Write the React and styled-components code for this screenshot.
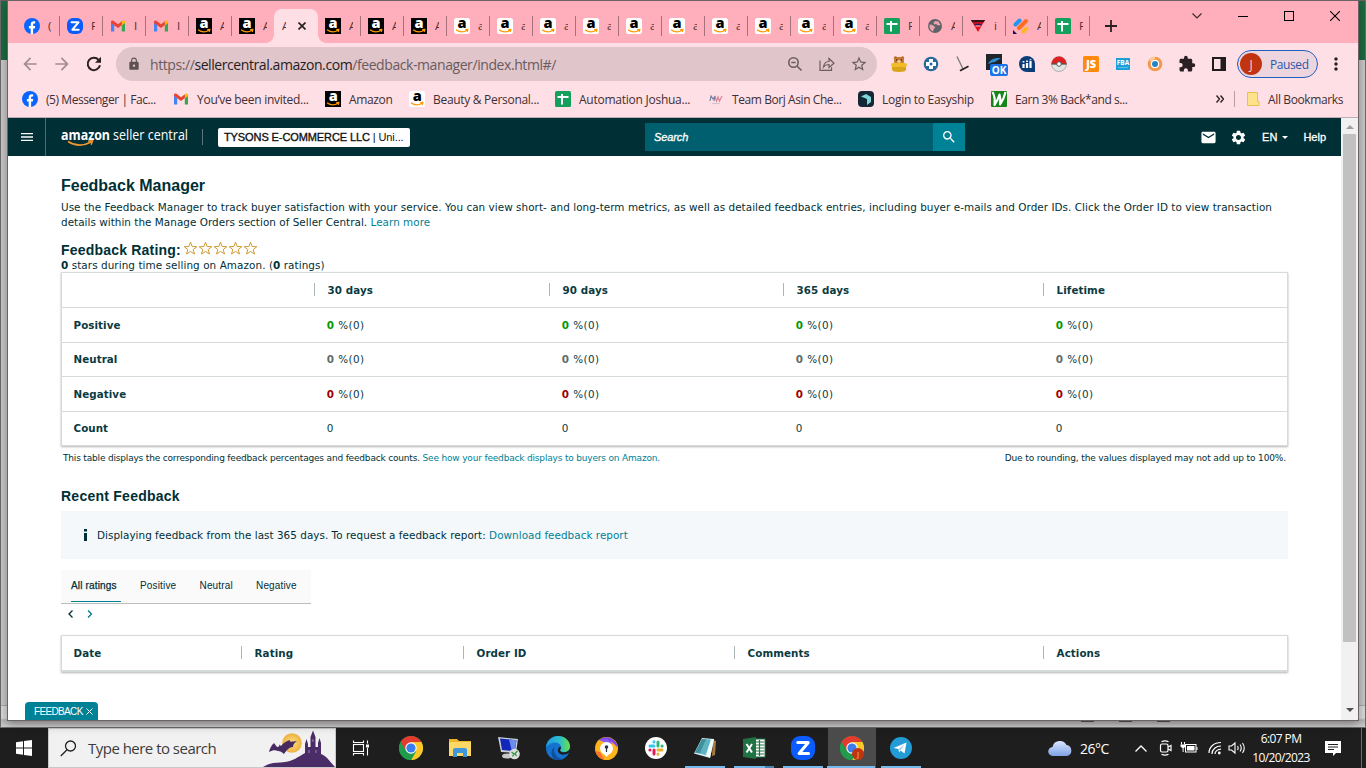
import React from "react";
import styled, { createGlobalStyle } from "styled-components";
import {
  MdArrowBack, MdArrowForward, MdLock, MdStarBorder, MdExtension,
  MdMoreVert, MdEmail, MdSettings, MdSearch, MdMenu,
} from "react-icons/md";

const Global = createGlobalStyle`
  *{box-sizing:border-box}
  body{margin:0;overflow:hidden;background:#c9c9c9}
  svg{display:block;flex:none}
`;
const segoe = `"Open Sans","Noto Sans",sans-serif`;
const verdana = `"DejaVu Sans",Verdana,sans-serif`;
const arial = `"Liberation Sans",Arial,sans-serif`;

/* ---------- desktop ---------- */
const Desktop = styled.div`
  position:relative;width:1366px;height:768px;display:flex;flex-direction:column;
  font-family:${segoe};overflow:hidden;background:#d0d0d0;
`;
const BackWindow = styled.div`
  height:728px;display:flex;flex-direction:column;background:#c9c7c7;
  border:1px solid #6b6b6b;border-top-color:#7a5a60;
`;
const BackTitle = styled.div`height:59px;background:#1d6b42;`;
const BackBody = styled.div`flex:1;border-bottom:1px solid #a9a9a9;background:#cbc9c9;`;
const BackStatus = styled.div`
  height:21px;background:linear-gradient(#dcdcdc 0 12px,#b5b5b5 14px,#cfcfcf);
  display:flex;align-items:flex-start;justify-content:flex-end;gap:25px;padding:13px 195px 0 0;
`;
const ViewButton = styled.span`width:13px;height:3px;border-bottom:1px solid #555;`;
const Browser = styled.div`
  position:absolute;left:7px;top:0;width:1352px;height:721px;display:flex;flex-direction:column;
  border:1px solid #6a6265;background:#fff;box-shadow:0 3px 10px rgba(0,0,0,.35);
`;

/* ---------- tab strip ---------- */
const TabStrip = styled.div`height:42px;background:#ffaebc;display:flex;padding:8px 0 0 9px;`;
const Tab = styled.div`
  width:${(p) => p.$w || 43}px;height:34px;display:flex;align-items:center;position:relative;
  padding-left:7px;gap:8px;
  &::after{content:"";position:absolute;right:0;top:7px;width:1px;height:20px;
    background:${(p) => (p.$noSep ? "transparent" : "#a5727c")};}
`;
const TabLetter = styled.span`
  width:4px;height:16px;overflow:hidden;font-size:11.5px;line-height:16px;color:#4b3035;
`;
const ActiveTab = styled.div`
  width:44px;height:34px;background:#ffdfe6;border-radius:8px 8px 0 0;display:flex;align-items:center;
  padding-left:8px;gap:12px;margin-left:-1px;position:relative;z-index:1;
  &::before,&::after{content:"";position:absolute;bottom:0;width:8px;height:8px;}
  &::before{left:-8px;background:radial-gradient(circle at 0 0,transparent 7.5px,#ffdfe6 8px);}
  &::after{right:-8px;background:radial-gradient(circle at 100% 0,transparent 7.5px,#ffdfe6 8px);}
`;
const NewTab = styled.div`width:42px;height:34px;display:flex;align-items:center;justify-content:center;`;
const WindowButtons = styled.div`
  margin-left:auto;height:14px;display:flex;align-items:center;
`;
const WindowButton = styled.div`width:46px;height:14px;display:flex;align-items:center;justify-content:center;`;

/* ---------- toolbar ---------- */
const Toolbar = styled.div`height:42px;background:#ffdfe6;display:flex;align-items:center;padding-left:6px;`;
const ToolButton = styled.div`
  width:32px;height:32px;display:flex;align-items:center;justify-content:center;
  color:${(p) => p.$c || "#2a2023"};flex:none;
`;
const Omnibox = styled.div`
  width:761px;height:34px;margin-left:6px;border-radius:17px;background:#e0c5ca;display:flex;align-items:center;
  padding:0 2px 0 11px;flex:none;margin-right:6px;
`;
const Url = styled.div`
  flex:1;margin-left:9px;font-size:14px;letter-spacing:${(p) => p.$ls}px;color:#6a5b5f;white-space:nowrap;
  b{font-weight:400;color:#251d1f;}
`;
const Profile = styled.div`
  width:81px;height:28px;border:1px solid #1f5fbf;border-radius:14px;background:#edd5e0;margin:0 2px;
  display:flex;align-items:center;padding-left:2px;gap:8px;color:#2b57a5;font-size:12px;letter-spacing:-.4px;flex:none;
`;
const Avatar = styled.div`
  width:22px;height:22px;border-radius:50%;background:#c0350f;color:#f6d6cc;font-size:12px;
  display:flex;align-items:center;justify-content:center;
`;

/* ---------- bookmarks ---------- */
const Bookmarks = styled.div`
  height:33px;background:#ffdfe6;border-bottom:1px solid #bcaeb2;display:grid;align-items:center;padding:0 0 4px 14px;
  grid-template-columns:151px 152px 84px 146px 153px 150px 133px 223px 20px 1px 1fr;
`;
const Bookmark = styled.div`
  display:flex;align-items:center;gap:8px;font-size:12px;color:#3d3033;white-space:nowrap;
  letter-spacing:${(p) => p.$ls || 0}px;padding-left:${(p) => p.$pl || 0}px;
`;
const BookmarkRule = styled.div`height:16px;width:1px;background:#b79ea4;`;

/* ---------- seller header ---------- */
const Viewport = styled.div`flex:1;display:flex;min-height:0;position:relative;`;
const Page = styled.div`width:1333px;display:flex;flex-direction:column;background:#fff;`;
const Header = styled.div`height:38px;background:#002f36;display:flex;align-items:center;flex:none;`;
const MenuCell = styled.div`
  width:38px;height:38px;border-right:1px solid #4b6b70;display:flex;align-items:center;justify-content:center;color:#fff;
`;
const Logo = styled.div`width:128px;margin-left:14px;height:26px;`;
const Rule = styled.div`width:1px;height:16px;background:#5b777b;margin:0 15px 0 14px;`;
const Account = styled.div`
  width:192px;height:19px;background:#fff;border-radius:2px;font:11px/19px ${arial};color:#111;padding-left:6px;
  white-space:nowrap;letter-spacing:${(p) => p.$ls}px;
  b{font-weight:400;-webkit-text-stroke:.35px #111;}
`;
const SearchBox = styled.div`
  width:288px;height:28px;margin-left:235px;background:#005f6e;color:#fff;font:italic 11px/28px ${arial};padding-left:9px;
  -webkit-text-stroke:.3px #fff;letter-spacing:-.1px;
`;
const SearchButton = styled.div`
  width:32px;height:28px;background:#008296;display:flex;align-items:center;justify-content:center;color:#fff;
`;
const HeaderRight = styled.div`
  margin-left:auto;display:flex;align-items:center;color:#fff;font:11px ${arial};-webkit-text-stroke:.3px #fff;
  padding-right:15px;
  svg{-webkit-text-stroke:0;}
`;
const Caret = styled.span`border:3px solid transparent;border-top-color:#fff;border-bottom:0;margin:0 15px 0 5px;`;
const Gap = styled.span`width:${(p) => p.$w}px;`;

/* ---------- page body ---------- */
const Body = styled.div`
  padding:21px 53px 0;display:flex;flex-direction:column;color:#002f36;font-family:${verdana};font-size:10.4px;position:relative;
`;
const Heading = styled.div`
  font:bold ${(p) => p.$s}px/18px ${arial};letter-spacing:${(p) => p.$ls || 0}px;height:18px;white-space:nowrap;
`;
const SectionHeading = styled(Heading)`margin-top:21px;`;
const Link = styled.span`color:#007f96;`;
const Intro = styled.div`
  margin-top:5px;display:flex;flex-direction:column;line-height:15px;white-space:nowrap;
`;
const Line = styled.div`font-size:${(p) => p.$s || 10.4}px;letter-spacing:${(p) => p.$ls}px;white-space:nowrap;`;
const RatingRow = styled.div`margin-top:11px;height:17px;display:flex;align-items:flex-start;gap:2px;`;
const Stars = styled.div`display:flex;gap:0;`;
const Tally = styled.div`height:14px;line-height:15px;letter-spacing:${(p) => p.$ls}px;white-space:nowrap;`;
const Table = styled.div`
  width:1227px;border:1px solid #d5dbdb;border-bottom-width:${(p) => p.$bb || 1}px;box-shadow:0 1px 2px rgba(0,0,0,.3);
  display:flex;flex-direction:column;margin-top:${(p) => p.$mt || 0}px;
`;
const Row = styled.div`
  display:grid;grid-template-columns:${(p) => p.$cols};height:${(p) => p.$h}px;align-items:center;
  & + &{border-top:1px solid #d5dbdb;}
`;
const Cell = styled.div`
  padding:0 0 ${(p) => p.$up || 0}px ${(p) => (p.$first ? 11.5 : p.$b ? 13.6 : 12.8)}px;white-space:nowrap;font-size:${(p) => (p.$b ? 10.3 : 10.4)}px;
  font-weight:${(p) => (p.$b ? 700 : 400)};letter-spacing:${(p) => (p.$b ? 0.08 : 0.45)}px;color:#0b3a41;
  position:relative;line-height:14px;
  ${(p) => p.$rule && `&::before{content:"";position:absolute;left:0;top:0;height:13px;width:1px;background:#aab7b8;}`}
  b{color:${(p) => p.$n || "inherit"};}
`;
const Notes = styled.div`
  display:flex;justify-content:space-between;padding:0 2px;height:17px;margin-top:3px;line-height:18px;font-size:9px;
`;
const Alert = styled.div`
  height:48px;background:#f4f8fa;margin-top:6px;display:flex;align-items:center;padding-left:22px;white-space:nowrap;
`;
const RatingTabs = styled.div`
  width:250px;height:34px;margin-top:11px;background:#fafafa;border-bottom:1px solid #b9bfbf;display:flex;padding-left:10px;
  font:10px/32px ${arial};
`;
const RatingTab = styled.div`
  width:${(p) => p.$w}px;height:32px;margin-right:${(p) => p.$mr}px;letter-spacing:.16px;white-space:nowrap;
  ${(p) => p.$on && "border-bottom:1px solid #008296;-webkit-text-stroke:.25px #002f36;"}
`;
const Pager = styled.div`height:20px;display:flex;align-items:center;gap:14px;padding-left:7px;`;
const FeedbackTab = styled.div`
  position:absolute;left:17px;bottom:0;width:73px;height:18px;background:#008296;color:#fff;border-radius:4px 4px 0 0;
  display:flex;align-items:center;padding-left:9px;gap:3px;font:10px ${arial};letter-spacing:-.65px;
`;
const ScrollBar = styled.div`
  width:17px;background:#f1f1f1;display:flex;flex-direction:column;align-items:center;padding:7px 0 8px;
`;
const Thumb = styled.div`width:13px;height:508px;background:#c1c1c1;margin-top:5px;`;
const Arrow = styled.div`
  border:4px solid transparent;
  ${(p) => (p.$down ? "border-top-color:#505050;border-bottom:0;margin-top:auto;" : "border-bottom-color:#a0a0a0;border-top:0;")}
`;

/* ---------- taskbar ---------- */
const Taskbar = styled.div`height:40px;background:#1e1e1e;display:flex;align-items:center;flex:none;color:#fff;`;
const StartCell = styled.div`width:48px;height:40px;display:flex;align-items:center;justify-content:center;`;
const SearchField = styled.div`
  width:288px;height:40px;background:#f1f1f1;border:1px solid #c9c9c9;display:flex;align-items:center;padding-left:11px;gap:11px;
  color:#3c3c3c;font-size:15px;letter-spacing:${(p) => p.$ls}px;
  svg:last-child{margin-left:auto;}
`;
const AppCell = styled.div`
  width:${(p) => p.$w || 49}px;height:40px;display:flex;align-items:center;justify-content:center;position:relative;
  ${(p) => p.$active && "background:linear-gradient(#4b4b4b,#4b4b4b) center/48px 100% no-repeat;"}
  &::after{content:"";position:absolute;bottom:0;left:${(p) => (p.$active ? 0 : 5)}px;right:${(p) => (p.$active ? 1 : 4)}px;height:2px;
    background:${(p) => (p.$split ? "linear-gradient(90deg,#76b9ed 31px,#4d81ad 31px)" : p.$run ? "#76b9ed" : "transparent")};}
`;
const Tray = styled.div`margin-left:auto;display:flex;align-items:center;height:40px;`;
const Temp = styled.div`font-size:14px;letter-spacing:-.5px;width:55px;padding-left:8px;`;
const Clock = styled.div`
  width:66px;display:flex;flex-direction:column;align-items:center;font-size:12px;line-height:19px;letter-spacing:-.6px;margin-left:2px;
`;
const ShowDesktop = styled.div`width:5px;height:40px;border-left:1px solid #6a6a6a;margin-left:19px;`;

/* ---------- icons ---------- */
const FbIcon = () => (
  <svg width="16" height="16" viewBox="0 0 16 16"><circle cx="8" cy="8" r="8" fill="#0866ff" />
    <path d="M6.700 16V10.400H4.900V8h1.800V6.600C6.700 4.300 7.800 3.200 9.900 3.200c.5 0 1 .1 1.300.2v2.100c-1.500-.1-2.100.1-2.100 1.300V8h2.100l-.4 2.400H9.100V16z" fill="#fff" /></svg>
);
const ReloadIcon = () => (
  <svg width="16" height="16" viewBox="0 0 16 16"><path d="M14 9.300A6.200 6.200 0 1 1 12.600 3.800" fill="none" stroke="#2a2023" strokeWidth="2" /><path d="M15 .8v6H9z" fill="#2a2023" /></svg>
);
const ZoomIcon = ({ s = 16 }) => (
  <svg width={s} height={s} viewBox="0 0 16 16"><rect width="16" height="16" rx="6" fill="#0b5cff" />
    <path d="M4.500 4.300h7L5.400 11.700h6.300" fill="none" stroke="#fff" strokeWidth="2" strokeLinejoin="round" strokeLinecap="round" /></svg>
);
const GmailIcon = () => (
  <svg width="16" height="16" viewBox="0 0 16 16">
    <path d="M1 13.500V4.500L4.200 7v6.500z" fill="#4285f4" /><path d="M11.800 13.500V7L15 4.500v9z" fill="#34a853" />
    <path d="M1 5V4c0-1.300 1.400-1.900 2.400-1.200L8 6.300l4.600-3.500 0 3.600L8 10 1 5z" fill="#ea4335" />
    <path d="M11.800 3.400l.8-.6C13.600 2.100 15 2.700 15 4v1l-3.200 2.500z" fill="#fbbc04" /></svg>
);
const AmazonIcon = ({ dark }) => (
  <svg width="16" height="16" viewBox="0 0 16 16"><rect width="16" height="16" rx={dark ? 0 : 2.500} fill={dark ? "#000" : "#fff"} />
    <text x="8" y="10.300" textAnchor="middle" fontFamily="Open Sans,sans-serif" fontWeight="800" fontSize="14.500" fill={dark ? "#fff" : "#000"}>a</text>
    <path d="M2 11.800Q7.500 15.800 13 12.300M11.200 11.700l2.600-.2-.5 2.300" fill="none" stroke="#f90" strokeWidth="1.300" /></svg>
);
const SheetIcon = () => (
  <svg width="16" height="16" viewBox="0 0 16 16"><rect width="16" height="16" rx="1.500" fill="#12a05c" />
    <path d="M2.500 6h11M7 3v10.500" stroke="#fff" strokeWidth="2" /></svg>
);
const GlobeIcon = () => (
  <svg width="16" height="16" viewBox="0 0 16 16"><circle cx="8" cy="8" r="7" fill="#5f6368" />
    <path d="M2.500 6.500l3 .5 3 2.500-1.500 1-1 3C3.500 12.500 2 10 2.500 6.500zM8.500 3l3 .5 2 3.500-2.500.5-2-1.500-2 .5-.5-2z" fill="#e8a5b0" /></svg>
);
const TriIcon = () => (
  <svg width="16" height="16" viewBox="0 0 16 16"><path d="M1 2h14L8 14z" fill="#e8111c" /><path d="M1 2h14l-1.300 2.300H2.300z" fill="#32151a" />
    <path d="M4.500 6.500h7" stroke="#2a1a60" strokeWidth="1.500" /><path d="M5.500 8h5" stroke="#fff" strokeWidth=".8" /></svg>
);
const SlashIcon = () => (
  <svg width="16" height="16" viewBox="0 0 16 16" strokeLinecap="round" strokeWidth="4" fill="none">
    <path d="M2.500 6.500L6.500 2.500" stroke="#2196f3" /><path d="M6 10l7-7" stroke="#ff6d1f" /><path d="M10.500 13.500l3-3" stroke="#ffb629" />
    <path d="M0 12l4 4H0z" fill="#160a4a" /></svg>
);
const BearIcon = () => (
  <svg width="18" height="18" viewBox="0 0 18 18"><circle cx="5.500" cy="3" r="1.700" fill="#b8691c" /><circle cx="12.500" cy="3" r="1.700" fill="#b8691c" />
    <rect x="4" y="2" width="10" height="8" rx="4" fill="#c47a33" /><ellipse cx="9" cy="6.500" rx="2" ry="1.400" fill="#f4c98c" />
    <circle cx="6.700" cy="5" r=".7" fill="#3a1c08" /><circle cx="11.300" cy="5" r=".7" fill="#3a1c08" />
    <rect x="1" y="8" width="16" height="4" rx="2" fill="#f0bd26" /><path d="M2 12h14v2.500q0 2.500-7 2.500t-7-2.500z" fill="#d9a31c" /></svg>
);
const MedIcon = () => (
  <svg width="16" height="16" viewBox="0 0 16 16"><circle cx="8" cy="8" r="7.300" fill="#28699b" />
    <path d="M6 3h4v3h3v4h-3v3H6v-3H3V6h3z" fill="#fff" /><circle cx="8" cy="8" r="1.500" fill="#28699b" /></svg>
);
const HookIcon = () => (
  <svg width="16" height="16" viewBox="0 0 16 16"><path d="M2 .5L8 13" stroke="#777" strokeWidth="1.300" /><path d="M5 14.800l8.500-4.500" stroke="#222" strokeWidth="1.800" /></svg>
);
const OkIcon = () => (
  <svg width="24" height="24" viewBox="0 0 24 24"><rect x="1" y="1" width="16" height="16" fill="#20242b" />
    <path d="M3 11c2-4 5-6 11-6l2 1c-3 0-4 2-6 3-2 .5-3 0-4 1z" fill="#2f8bd0" /><rect x="5" y="11" width="18" height="12" rx="2" fill="#1a73e8" />
    <text x="14" y="20.800" textAnchor="middle" fontFamily="Open Sans,sans-serif" fontWeight="700" fontSize="10" fill="#fff">OK</text></svg>
);
const OkOffset = styled.div`padding:2px 0 0 4px;`;
const HeliumIcon = () => (
  <svg width="16" height="16" viewBox="0 0 16 16"><circle cx="8" cy="8" r="8" fill="#0c3d78" /><rect x="9" y="9" width="7" height="7" fill="#0c3d78" />
    <path d="M4.500 8v4M8 7v5M11.500 5v7" stroke="#fff" strokeWidth="2.200" /><path d="M4.500 5v1.500M8 4.500V6M11.500 3.200v1" stroke="#fff" strokeWidth="1.800" /></svg>
);
const BallIcon = () => (
  <svg width="16" height="16" viewBox="0 0 16 16"><circle cx="8" cy="8" r="7.500" fill="#e4e4e4" stroke="#888" strokeWidth=".6" />
    <path d="M.5 8a7.500 7.500 0 0115 0z" fill="#e0201f" /><path d="M.5 8h15" stroke="#555" strokeWidth="1.300" /><circle cx="8" cy="8" r="2.300" fill="#fff" stroke="#555" /></svg>
);
const JsIcon = () => (
  <svg width="16" height="16" viewBox="0 0 16 16"><rect width="16" height="16" rx="1.500" fill="#ff8a0c" />
    <text x="8" y="12" textAnchor="middle" fontFamily="Open Sans,sans-serif" fontWeight="800" fontSize="11" fill="#fff">JS</text></svg>
);
const FbaIcon = () => (
  <svg width="14" height="14" viewBox="0 0 14 14"><rect y="1" width="14" height="12" fill="#1c9fd8" />
    <text x="7" y="8" textAnchor="middle" fontFamily="Open Sans,sans-serif" fontWeight="700" fontSize="6.500" fill="#fff">FBA</text>
    <path d="M2 10.500h10" stroke="#5cc0e8" /></svg>
);
const RingIcon = () => (
  <svg width="16" height="16" viewBox="0 0 16 16"><circle cx="8" cy="8" r="5.800" fill="none" stroke="#f2994a" strokeWidth="3" />
    <path d="M3 5a6 6 0 0 1 5-3" stroke="#ffd29b" strokeWidth="2" fill="none" /><circle cx="8" cy="8" r="4" fill="#fff" /><circle cx="8" cy="8" r="3" fill="#2186c4" /></svg>
);
const SidePanelIcon = () => (
  <svg width="14" height="14" viewBox="0 0 14 14"><rect x="1" y="1" width="12" height="12" fill="none" stroke="#231c1e" strokeWidth="2" /><rect x="8.500" y="1" width="5" height="12" fill="#231c1e" /></svg>
);
const ZoomOutIcon = () => (
  <svg width="16" height="16" viewBox="0 0 16 16" fill="none" stroke="#6b5d61" strokeWidth="1.600"><circle cx="6.500" cy="6.500" r="4.700" /><path d="M10 10l4.500 4.500M4.300 6.500h4.400" /></svg>
);
const ShareIcon = () => (
  <svg width="16" height="16" viewBox="0 0 16 16" fill="none" stroke="#6b5d61" strokeWidth="1.200"><path d="M1 4.500v9.800h11.500v-3M4.500 11c.5-4 2.500-5.500 5.500-5.500V2.500l5 4.700-5 4.300V8.500C7.500 8.400 6 9 4.500 11z" /></svg>
);
const TeamIcon = () => (
  <svg width="16" height="16" viewBox="0 0 16 16" fill="none" strokeWidth="1.200"><path d="M2 10l1-5 2 3 2-3-1 5" stroke="#7580a5" /><path d="M7 5l1.500 5L10 6l1.500 4L14 5" stroke="#dc8594" /><path d="M4 12.500h8" stroke="#d5c5cc" /></svg>
);
const EasyshipIcon = () => (
  <svg width="16" height="16" viewBox="0 0 16 16"><rect width="16" height="16" rx="4" fill="#132734" /><path d="M3 5.500L8 3l5 3v5l-4 3V8z" fill="#7fd6d8" /></svg>
);
const WIcon = () => (
  <svg width="16" height="16" viewBox="0 0 16 16"><rect width="16" height="16" rx="1" fill="#16841a" />
    <path d="M1.500 1Q4.500 6 3.500 14Q7 9 8.500 3.500Q10 8 9 13.500Q13 8 14.500 1" fill="none" stroke="#fff" strokeWidth="2.200" strokeLinejoin="round" /></svg>
);
const FolderIcon = () => (
  <svg width="14" height="16" viewBox="0 0 14 16"><path d="M1.500 1.500h10v9h1.500v4H1.500z" fill="#fde28b" stroke="#e8c349" /></svg>
);
const Star = () => (
  <svg width="15" height="15" viewBox="0 0 15 15"><path d="M7.500 1.200l1.700 4.300 4.600.2-3.600 2.900 1.300 4.400-4-2.500-4 2.500 1.300-4.400L1.200 5.700l4.600-.2z" fill="#fffdf5" stroke="#cf9a35" strokeWidth="1" /></svg>
);
const ChromeIcon = ({ badge }) => (
  <svg width="24" height="24" viewBox="0 0 24 24"><circle cx="12" cy="12" r="12" fill="#1f9d4d" />
    <path d="M1.600 6A12 12 0 0122.400 6H12v12z" fill="#e33b2e" /><path d="M22.400 6A12 12 0 0112 24l5.200-9L12 6z" fill="#fdc727" />
    <path d="M1.600 6L6.800 15 10 8z" fill="#e33b2e" /><path d="M1.600 6A12 12 0 0012 24l5.200-9H6.800z" fill="#1f9d4d" />
    <circle cx="12" cy="12" r="5.700" fill="#fff" /><circle cx="12" cy="12" r="4.600" fill="#3a7ded" />
    {badge && <><circle cx="18" cy="18" r="6" fill="#c0350f" /><text x="18" y="21" textAnchor="middle" fontSize="8" fontFamily="Open Sans,sans-serif" fill="#f0c0b0">J</text></>}</svg>
);
const ExplorerIcon = () => (
  <svg width="22" height="20" viewBox="0 0 22 20"><path d="M0 1h8l2 2h12v15H0z" fill="#eeb52a" /><path d="M0 4h22v14H0z" fill="#fcd867" />
    <path d="M4 19v-7q0-2 2-2h10q2 0 2 2v7h-4v-4H8v4z" fill="#3e96dc" /></svg>
);
const RemoteIcon = () => (
  <svg width="24" height="24" viewBox="0 0 24 24"><path d="M1 1l20 2-2 14-15-1z" fill="#c9ced6" /><path d="M3 2.500l16.500 1.700-1.700 11L5 14z" fill="#1226b8" /><path d="M12 3.500l7.500.7-1.700 11-3-.3z" fill="#6d8cf0" />
    <ellipse cx="10" cy="20" rx="5" ry="2.500" fill="#c7c7c7" /><circle cx="17.500" cy="18" r="5.300" fill="#dedede" /><path d="M14.500 16l2.500 2-1.500 2.500M20.500 15L18 17.500l1.500 2.500" stroke="#31953a" strokeWidth="1.300" fill="none" /></svg>
);
const EdgeIcon = () => (
  <svg width="24" height="24" viewBox="0 0 24 24"><defs><linearGradient id="eg"><stop offset="0" stopColor="#1f9be0" /><stop offset=".55" stopColor="#29bcd0" /><stop offset="1" stopColor="#6be04a" /></linearGradient></defs>
    <circle cx="12" cy="12" r="12" fill="#1573cf" /><path d="M0 11C1 4 6 0 12 0c7 0 12 5 12 10 0 4-3 6-6 6s-4-1-4-2c1-1 1.500-2 1-3.500C14 7 9 5.500 5 7.500 3 8.500 1 10 0 11z" fill="url(#eg)" />
    <path d="M8.500 11c-2 6 3 12 8.500 12-3 1.500-6 1.200-9 0C5 20 4 14 8.500 11z" fill="#0f4f9e" />
    <path d="M14 14c0 1.500 1.500 2.300 4 2.300 2.500 0 4.500-1 6-3.300l0 3-2 1.500c-4 2-8.500 1.500-10-2-.7-2 .5-4.500 2.500-5 .7 1 .5 2.500-.5 3.500z" fill="#1e1e1e" /></svg>
);
const ShieldIcon = () => (
  <svg width="23" height="23" viewBox="0 0 23 23"><circle cx="11.500" cy="11.500" r="11.500" fill="#ffb41e" /><path d="M4 3a11.500 11.500 0 0118.800 7.500L17 5z" fill="#7b45ee" /><path d="M4 3l8-1 6 5-7-1z" fill="#8f5df5" />
    <path d="M.5 14a11.500 11.500 0 009 8.500L5 15z" fill="#ff6f2c" /><circle cx="11.500" cy="11.500" r="6.500" fill="#fff" /><path d="M6 13h11l-5.500 7z" fill="#fff" /><circle cx="11.500" cy="10" r="1.800" fill="#28304a" /><path d="M10.900 10h1.200v5h-1.200z" fill="#28304a" /></svg>
);
const SlackIcon = () => (
  <svg width="22" height="22" viewBox="0 0 22 22" strokeWidth="3" strokeLinecap="round"><circle cx="11" cy="11" r="11" fill="#fff" />
    <path d="M5 9h4M9 4.800v.1" stroke="#36c5f0" /><path d="M13 5v4M17 9h.1" stroke="#2eb67d" /><path d="M13 13h4M13 17.200v-.1" stroke="#ecb22e" /><path d="M9 13v4M5 13h-.1" stroke="#e01e5a" /></svg>
);
const NotepadIcon = () => (
  <svg width="24" height="24" viewBox="0 0 24 24"><path d="M20 4l3 1-1 14-3 1z" fill="#a77c3b" /><path d="M9 2l12 1-4 19L1 17.500z" fill="#d5eef2" /><path d="M9 3l9 .5-5 15.500-11-2.500z" fill="#5fb4c2" /><path d="M9 3l4 .3-6 13.900-5-.7z" fill="#3f8f9f" /><path d="M18 3.500l3-.5-4 19-4-3z" fill="#f2fafb" /></svg>
);
const ExcelIcon = () => (
  <svg width="24" height="24" viewBox="0 0 24 24"><rect x="11" y="3" width="12" height="18" fill="#fff" stroke="#1f7244" />
    <path d="M13 6h9M13 9h9M13 12h9M13 15h9M13 18h9M17.500 4v16" stroke="#1f7244" strokeWidth="1.200" /><path d="M1 3l13-2v22L1 21z" fill="#1f7244" />
    <path d="M4.500 8l5.500 8.500M10 8l-5.500 8.500" stroke="#fff" strokeWidth="2" /></svg>
);
const TelegramIcon = () => (
  <svg width="22" height="22" viewBox="0 0 22 22"><circle cx="11" cy="11" r="11" fill="#229bd6" /><path d="M3.500 11L16.500 5.500 14.500 16.500 10.500 13.500 9 15.500 8.500 12z" fill="#fff" /><path d="M8.500 12.300l6-4.800-4 5.500z" fill="#8fc8e8" /></svg>
);
const TaskViewIcon = () => (
  <svg width="18" height="16" viewBox="0 0 18 16" fill="none" stroke="#fff" strokeWidth="1.100"><rect x="1.500" y="4.500" width="10" height="7" /><path d="M1.500 .5v2h10v-2M1.500 15.500v-2h10v2M15.500 .5v3M15.500 8v7.500" /><path d="M14 4.500h3v3h-3z" fill="#fff" stroke="none" /></svg>
);
const Castle = () => (
  <svg width="72" height="38" viewBox="0 0 72 38"><defs><radialGradient id="mn"><stop offset="0" stopColor="#fbe08a" /><stop offset="1" stopColor="#eeb13f" /></radialGradient></defs>
    <circle cx="29" cy="14" r="9.800" fill="url(#mn)" />
    <path d="M6 23c1-4 2-6 5-9l3 4 2-.5.500-2 1.500 1.500c3-4 6-5 9-6-1 2 1 2 7 1-3 2-4 4-4 6-4 0-6 3-9 7-2-2-4-3-6-3-3-1-5-1-9 1z" fill="#472a60" />
    <path d="M0 38c8-5 13-4 22-5 8-1 13-5 20-9V15l1.500-5L45 15v3h2.500V8L50 1.500 52.500 8v10H55v-4l1.500-5L58 14v11c6 2 9 8 14 13z" fill="#4a2c66" />
    <path d="M46 21v3M53 21v3M50 10v3" stroke="#9a7bb5" strokeWidth="1.100" /></svg>
);
const CloudIcon = () => (
  <svg width="24" height="16" viewBox="0 0 24 16"><defs><linearGradient id="cl" x2="0" y2="1"><stop offset="0" stopColor="#d9e6ff" /><stop offset="1" stopColor="#7fa3e6" /></linearGradient></defs>
    <path d="M5 16a4.500 4.500 0 01-.5-9A7.500 7.500 0 0118.500 5 5.600 5.600 0 0119 16z" fill="url(#cl)" /></svg>
);
const CamIcon = () => (
  <svg width="14" height="16" viewBox="0 0 14 16" fill="none" stroke="#fff" strokeWidth="1.200"><rect x="1.500" y="4" width="7.500" height="8" rx="1.500" /><path d="M9 7l3-1.500v5L9 9M2.500 1.800Q6 0 9.500 1.800M2.500 14.200Q6 16 9.500 14.200" /></svg>
);
const BatteryIcon = () => (
  <svg width="18" height="14" viewBox="0 0 18 14"><rect x="5.500" y="3.500" width="10.500" height="7.500" fill="#1e1e1e" stroke="#fff" /><path d="M7 5h7.500v4.500H7zM16.500 6h1v3h-1z" fill="#fff" /><path d="M1.500 1v2.500M4.500 1v2.500" stroke="#fff" strokeWidth="1" /><path d="M.5 3.500h5v2L3.600 7.300v3.700H2.600V7.300L.5 5.500z" fill="#fff" /></svg>
);
const WifiIcon = () => (
  <svg width="14" height="14" viewBox="0 0 14 14" fill="none" stroke="#fff" strokeWidth="1.200"><path d="M1 12C1 6 6 1.500 13 1.500M4 13C4 8.500 8 5 13 5M7 13c0-2.500 2.500-4.800 6-4.800" /><circle cx="11.300" cy="12" r="1.400" fill="#fff" stroke="none" /></svg>
);
const SpeakerIcon = () => (
  <svg width="18" height="14" viewBox="0 0 18 14" fill="none" stroke="#fff" strokeWidth="1.100"><path d="M1 5h2.500L7 2v10L3.500 9H1zM9.500 5q1.300 2 0 4M12 3.500q2.500 3.500 0 7M14.500 2q3.500 5 0 10" /></svg>
);
const NoteIcon = () => (
  <svg width="17" height="17" viewBox="0 0 17 17"><path d="M0 1h16v12h-5l-3 3v-3H0z" fill="#fff" /><path d="M3 4.500h10M3 7h10M3 9.500h6" stroke="#1e1e1e" strokeWidth="1.100" /></svg>
);
const SellerLogo = () => (
  <svg width="130" height="26" viewBox="0 0 130 26">
    <text x="1" y="15.500" fontFamily="Open Sans,sans-serif" fontWeight="700" fontSize="14.500" fill="#fff" textLength="49" lengthAdjust="spacingAndGlyphs">amazon</text>
    <text x="53" y="15.500" fontFamily="Open Sans,sans-serif" fontSize="15" fill="#fff" textLength="75" lengthAdjust="spacingAndGlyphs">seller central</text>
    <path d="M8 17.500Q19 24.500 31 18M28 17l4.500-.3-1.300 4" fill="none" stroke="#f0962e" strokeWidth="1.500" /></svg>
);

/* ---------- data ---------- */
const leftTabs = [[<FbIcon />, "("], [<ZoomIcon />, "F"], [<GmailIcon />, "I"], [<GmailIcon />, "I"], [<AmazonIcon dark />, "A"], [<AmazonIcon dark />, "A"]];
const rightTabs = [
  ...Array(3).fill([<AmazonIcon dark />, "A"]),
  ...Array(10).fill([<AmazonIcon />, "a"]),
  [<SheetIcon />, "F"], [<GlobeIcon />, "A"], [<TriIcon />, "i"], [<SlashIcon />, "A", 42], [<SheetIcon />, "F", 42],
];
const bookmarks = [
  [<FbIcon />, "(5) Messenger | Fac...", -0.43], [<GmailIcon />, "You’ve been invited...", -0.27], [<AmazonIcon dark />, "Amazon", -0.35],
  [<AmazonIcon />, "Beauty & Personal...", -0.3], [<SheetIcon />, "Automation Joshua...", -0.25], [<TeamIcon />, "Team Borj Asin Che...", -0.42],
  [<EasyshipIcon />, "Login to Easyship", -0.28], [<WIcon />, "Earn 3% Back*and s...", -0.42],
];
const extensions = [<BearIcon />, <MedIcon />, <HookIcon />, <OkOffset><OkIcon /></OkOffset>, <HeliumIcon />, <BallIcon />, <JsIcon />, <FbaIcon />, <RingIcon />, <MdExtension size={18} />, <SidePanelIcon />];
const summaryCols = "252px 235px 234px 260px 1fr";
const recentCols = "179px 222px 271px 309px 1fr";
const summary = [
  ["Positive", "#090", 35, 0, 1], ["Neutral", "#5f6b6c", 34, 1, 1], ["Negative", "#a00000", 35, 0, 1],
];

const renderTab = ([icon, letter, w], i, last) => (
  <Tab key={i} $w={w} $noSep={last}>{icon}<TabLetter>{letter}</TabLetter></Tab>
);

export default function App() {
  return (
    <Desktop>
      <Global />
      <BackWindow><BackTitle /><BackBody /><BackStatus><ViewButton /><ViewButton /><ViewButton /></BackStatus></BackWindow>
      <Browser>
        <TabStrip>
          {leftTabs.map((t, i) => renderTab(t, i, i === 5))}
          <ActiveTab>
            <TabLetter>A</TabLetter>
            <svg width="8" height="8" viewBox="0 0 8 8"><path d="M.5 .5l7 7M7.500 .5l-7 7" stroke="#2a2023" strokeWidth="1.700" /></svg>
          </ActiveTab>
          {rightTabs.map((t, i) => renderTab(t, i, false))}
          <NewTab><svg width="12" height="12" viewBox="0 0 12 12"><path d="M6 0v12M0 6h12" stroke="#2a2023" strokeWidth="1.800" /></svg></NewTab>
          <WindowButtons>
            <WindowButton><svg width="10" height="6" viewBox="0 0 10 6"><path d="M.5 .5L5 5 9.500 .5" fill="none" stroke="#3a2a2e" strokeWidth="1.200" /></svg></WindowButton>
            <WindowButton><svg width="10" height="1"><rect width="10" height="1" fill="#000" /></svg></WindowButton>
            <WindowButton><svg width="10" height="10"><rect x=".5" y=".5" width="9" height="9" fill="none" stroke="#000" /></svg></WindowButton>
            <WindowButton><svg width="10" height="10"><path d="M0 0l10 10M10 0L0 10" stroke="#000" strokeWidth="1.100" /></svg></WindowButton>
          </WindowButtons>
        </TabStrip>
        <Toolbar>
          <ToolButton $c="#a08c91"><MdArrowBack size={20} /></ToolButton>
          <ToolButton $c="#a08c91"><MdArrowForward size={20} /></ToolButton>
          <ToolButton><ReloadIcon /></ToolButton>
          <Omnibox>
            <MdLock size={14} color="#5d5054" />
            <Url $ls={-0.42}>https://<b>sellercentral.amazon.com</b>/feedback-manager/index.html#/</Url>
            <ToolButton><ZoomOutIcon /></ToolButton>
            <ToolButton><ShareIcon /></ToolButton>
            <ToolButton $c="#6b5d61"><MdStarBorder size={18} /></ToolButton>
          </Omnibox>
          {extensions.map((e, i) => <ToolButton key={i}>{e}</ToolButton>)}
          <Profile><Avatar>J</Avatar>Paused</Profile>
          <ToolButton><MdMoreVert size={20} /></ToolButton>
        </Toolbar>
        <Bookmarks>
          {bookmarks.map(([icon, text, ls]) => <Bookmark key={text} $ls={ls}>{icon}<span>{text}</span></Bookmark>)}
          <Bookmark $pl={2}><svg width="8" height="8" viewBox="0 0 8 8"><path d="M.5 .5L3.500 4 .5 7.500M4.500 .5L7.500 4 4.500 7.500" fill="none" stroke="#2a2023" strokeWidth="1.400" /></svg></Bookmark>
          <BookmarkRule />
          <Bookmark $pl={11} $ls={-0.37}><FolderIcon /><span>All Bookmarks</span></Bookmark>
        </Bookmarks>
        <Viewport>
          <Page>
            <Header>
              <MenuCell><MdMenu size={16} /></MenuCell>
              <Logo><SellerLogo /></Logo>
              <Rule />
              <Account $ls={-0.1}><b>TYSONS E-COMMERCE LLC</b> | Uni...</Account>
              <SearchBox>Search</SearchBox>
              <SearchButton><MdSearch size={16} /></SearchButton>
              <HeaderRight>
                <MdEmail size={17} /><Gap $w={13} /><MdSettings size={17} /><Gap $w={15} />EN<Caret />Help
              </HeaderRight>
            </Header>
            <Body>
              <Heading $s={16}>Feedback Manager</Heading>
              <Intro>
                <Line $ls={0.05}>Use the Feedback Manager to track buyer satisfaction with your service. You can view short- and long-term metrics, as well as detailed feedback entries, including buyer e-mails and Order IDs. Click the Order ID to view transaction</Line>
                <Line $ls={0.04}>details within the Manage Orders section of Seller Central. <Link>Learn more</Link></Line>
              </Intro>
              <RatingRow>
                <Heading $s={14} $ls={0.2}>Feedback Rating:</Heading>
                <Stars><Star /><Star /><Star /><Star /><Star /></Stars>
              </RatingRow>
              <Tally $ls={0.08}><b>0</b> stars during time selling on Amazon. (<b>0</b> ratings)</Tally>
              <Table>
                <Row $cols={summaryCols} $h={34}>
                  <Cell $first />
                  {["30 days", "90 days", "365 days", "Lifetime"].map((h) => <Cell key={h} $b $rule>{h}</Cell>)}
                </Row>
                {summary.map(([name, color, h, nameUp, up]) => (
                  <Row key={name} $cols={summaryCols} $h={h}>
                    <Cell $first $b $up={nameUp}>{name}</Cell>
                    {[0, 1, 2, 3].map((i) => <Cell key={i} $n={color} $up={up}><b>0</b> %(0)</Cell>)}
                  </Row>
                ))}
                <Row $cols={summaryCols} $h={34}>
                  <Cell $first $b $up={1}>Count</Cell>
                  {[0, 1, 2, 3].map((i) => <Cell key={i} $up={1}>0</Cell>)}
                </Row>
              </Table>
              <Notes>
                <Line $s={9} $ls={-0.18}>This table displays the corresponding feedback percentages and feedback counts. <Link>See how your feedback displays to buyers on Amazon.</Link></Line>
                <Line $s={9} $ls={-0.13}>Due to rounding, the values displayed may not add up to 100%.</Line>
              </Notes>
              <SectionHeading $s={14} $ls={0.25}>Recent Feedback</SectionHeading>
              <Alert>
                <svg width="5" height="13" viewBox="0 0 5 13"><path d="M1 0h3v2.500H1zM1 4h3v8H1z" fill="#002f36" /></svg>
                <Gap $w={9} />
                <Line $ls={0.04}>Displaying feedback from the last 365 days. To request a feedback report: <Link>Download feedback report</Link></Line>
              </Alert>
              <RatingTabs>
                <RatingTab $on $w={50} $mr={19}>All ratings</RatingTab>
                <RatingTab $w={36} $mr={23.5}>Positive</RatingTab>
                <RatingTab $w={33} $mr={23.5}>Neutral</RatingTab>
                <RatingTab $w={41} $mr={0}>Negative</RatingTab>
              </RatingTabs>
              <Pager>
                <svg width="5" height="8" viewBox="0 0 5 8"><path d="M4.500 .5L1 4l3.500 3.500" fill="none" stroke="#002f36" strokeWidth="1.300" /></svg>
                <svg width="6" height="8" viewBox="0 0 5 8"><path d="M.5 .5L4 4 .5 7.500" fill="none" stroke="#007a8c" strokeWidth="1.300" /></svg>
              </Pager>
              <Table $mt={11} $bb={2}>
                <Row $cols={recentCols} $h={34}>
                  <Cell $first $b>Date</Cell>
                  {["Rating", "Order ID", "Comments", "Actions"].map((h) => <Cell key={h} $b $rule>{h}</Cell>)}
                </Row>
              </Table>
            </Body>
          </Page>
          <ScrollBar><Arrow /><Thumb /><Arrow $down /></ScrollBar>
          <FeedbackTab>FEEDBACK<svg width="7" height="7" viewBox="0 0 7 7"><path d="M.5 .5l6 6M6.500 .5l-6 6" stroke="#fff" /></svg></FeedbackTab>
        </Viewport>
      </Browser>
      <Taskbar>
        <StartCell><svg width="16" height="16" viewBox="0 0 16 16"><path d="M0 2.200L7 1.200v6.300H0zM8 1l8-1v7.500H8zM0 8.500h7v6.300L0 13.800zM8 8.500h8V16l-8-1z" fill="#fff" /></svg></StartCell>
        <SearchField $ls={-0.52}>
          <svg width="17" height="17" viewBox="0 0 17 17" fill="none" stroke="#222" strokeWidth="1.300"><circle cx="10.500" cy="6" r="5" /><path d="M7 9.800L.8 16" /></svg>
          <span>Type here to search</span>
          <Castle />
        </SearchField>
        <AppCell $w={50}><TaskViewIcon /></AppCell>
        <AppCell><ChromeIcon /></AppCell>
        <AppCell><ExplorerIcon /></AppCell>
        <AppCell><RemoteIcon /></AppCell>
        <AppCell><EdgeIcon /></AppCell>
        <AppCell><ShieldIcon /></AppCell>
        <AppCell><SlackIcon /></AppCell>
        <AppCell $run><NotepadIcon /></AppCell>
        <AppCell $split><ExcelIcon /></AppCell>
        <AppCell $run><ZoomIcon s={24} /></AppCell>
        <AppCell $run $active><ChromeIcon badge /></AppCell>
        <AppCell $run><TelegramIcon /></AppCell>
        <Tray>
          <CloudIcon /><Temp>26°C</Temp><Gap $w={8} />
          <svg width="12" height="7" viewBox="0 0 12 7"><path d="M.5 6.500L6 1l5.500 5.500" fill="none" stroke="#fff" strokeWidth="1.300" /></svg>
          <Gap $w={12} /><CamIcon /><Gap $w={7} /><BatteryIcon /><Gap $w={10} /><WifiIcon /><Gap $w={6} /><SpeakerIcon />
          <Clock><span>6:07 PM</span><span>10/20/2023</span></Clock>
          <Gap $w={11} /><NoteIcon /><ShowDesktop />
        </Tray>
      </Taskbar>
    </Desktop>
  );
}
